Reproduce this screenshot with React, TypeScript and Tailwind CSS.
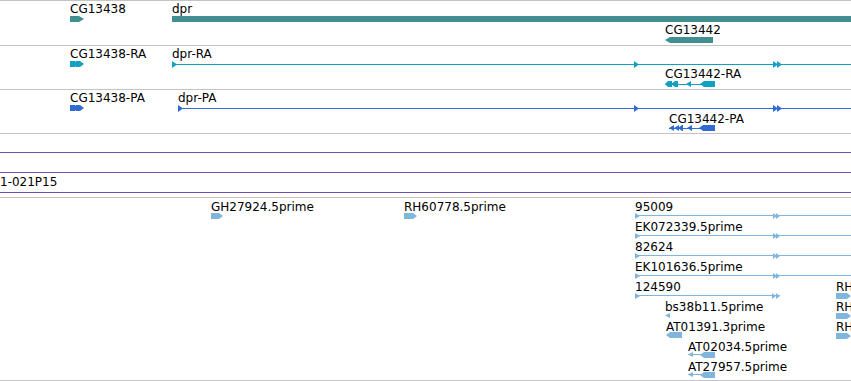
import type { ReactNode } from "react";

// colours picked off the screenshot
const TEAL = "#418f91";
const CYAN = "#12a0c3";
const BLUE = "#2f6bd0";
const EST = "#80b5dd";
const CLONE = "#7052ab";

type Label = { x: number; b: number; t: string };

// right / left pointing feature boxes
const boxR = (x1: number, x2: number, y: number, h: number, tip = 4) =>
  `${x1},${y} ${x2 - tip},${y} ${x2},${y + h / 2} ${x2 - tip},${y + h} ${x1},${y + h}`;
const boxL = (x1: number, x2: number, y: number, h: number, tip = 4) =>
  `${x1},${y + h / 2} ${x1 + tip},${y} ${x2},${y} ${x2},${y + h} ${x1 + tip},${y + h}`;
const triR = (x: number, y: number, w: number, h: number) => `${x},${y} ${x + w},${y + h / 2} ${x},${y + h}`;
const triL = (x: number, y: number, w: number, h: number) => `${x + w},${y} ${x},${y + h / 2} ${x + w},${y + h}`;

// one track: features drawn in page coordinates, shifted by the track's top
function Track({
  top,
  className,
  labels,
  children,
}: {
  top: number;
  className: string;
  labels: Label[];
  children?: ReactNode;
}) {
  return (
    <div className={`relative overflow-hidden border-b border-[#c4c4c4] ${className}`}>
      <svg className="absolute inset-0 h-full w-full">
        <g transform={`translate(0 ${-top})`}>{children}</g>
      </svg>
      {labels.map((l) => (
        <span
          key={l.t + l.x + l.b}
          className="absolute whitespace-nowrap text-[12px] leading-[14px] text-black"
          style={{ left: l.x, top: l.b - 11 - top }}
        >
          {l.t}
        </span>
      ))}
    </div>
  );
}

// transcript glyph: thin line with little strand arrows
function Transcript({ x1, x2, y, color, marks }: { x1: number; x2: number; y: number; color: string; marks: number[] }) {
  return (
    <g fill={color}>
      <rect x={x1} y={y} width={x2 - x1} height={1} />
      {marks.map((m) => (
        <polygon key={m} points={triR(m, y - 3, 5, 7)} />
      ))}
    </g>
  );
}

function MultiLeft({ x, y, color }: { x: number; y: number; color: string }) {
  // CG13442 style exon set, minus strand
  return (
    <g fill={color}>
      <rect x={x} y={y + 3} width={50} height={1} />
      <polygon points={boxL(x, x + 7, y, 6, 3)} />
      <polygon points={boxL(x + 6, x + 13, y, 6, 4)} />
      <polygon points={triL(x + 21, y, 5, 6)} />
      <polygon points={boxL(x + 35, x + 50, y, 6, 4)} />
      <polygon points={triL(x + 40, y, 5, 6)} />
    </g>
  );
}

export default function App() {
  const estRows = [211, 231, 251, 271, 291, 311, 331, 351, 371];
  return (
    <div className="h-[381px] w-[851px] overflow-hidden bg-white font-['DejaVu_Sans',sans-serif]">
      <div className="border-t border-[#c4c4c4]" />

      {/* genes */}
      <Track
        top={1}
        className="h-[45px]"
        labels={[
          { x: 70, b: 13, t: "CG13438" },
          { x: 172, b: 13, t: "dpr" },
          { x: 665, b: 34, t: "CG13442" },
        ]}
      >
        <g fill={TEAL}>
          <polygon points={boxR(70, 84, 16, 6, 5)} />
          <rect x={172} y={16} width={679} height={6} />
          <polygon points={boxL(665, 713, 37, 6, 5)} />
        </g>
      </Track>

      {/* RA transcripts */}
      <Track
        top={46}
        className="h-[44px]"
        labels={[
          { x: 70, b: 58, t: "CG13438-RA" },
          { x: 172, b: 58, t: "dpr-RA" },
          { x: 665, b: 78, t: "CG13442-RA" },
        ]}
      >
        <g fill={CYAN}>
          <polygon points={boxR(70, 78, 61, 6, 3)} />
          <polygon points={boxR(76, 84, 61, 6, 4)} />
        </g>
        <Transcript x1={172} x2={851} y={64} color={CYAN} marks={[172, 634, 773, 777]} />
        <MultiLeft x={665} y={81} color={CYAN} />
      </Track>

      {/* PA translations */}
      <Track
        top={90}
        className="h-[44px]"
        labels={[
          { x: 70, b: 102, t: "CG13438-PA" },
          { x: 178, b: 102, t: "dpr-PA" },
          { x: 669, b: 123, t: "CG13442-PA" },
        ]}
      >
        <g fill={BLUE}>
          <polygon points={boxR(70, 78, 105, 6, 3)} />
          <polygon points={boxR(76, 84, 105, 6, 4)} />
        </g>
        <Transcript x1={178} x2={851} y={108} color={BLUE} marks={[178, 634, 773, 777]} />
        <g fill={BLUE}>
          <rect x={669} y={128} width={46} height={1} />
          <polygon points={triL(669, 125, 5, 6)} />
          <polygon points={triL(674, 125, 5, 6)} />
          <polygon points={boxL(678, 683, 125, 6, 4)} />
          <polygon points={triL(687, 125, 5, 6)} />
          <polygon points={boxL(699, 715, 125, 6, 4)} />
          <polygon points={triL(704, 125, 5, 6)} />
        </g>
      </Track>

      {/* clones */}
      <Track top={134} className="h-[64px]" labels={[{ x: 0, b: 186, t: "1-021P15" }]}>
        <g fill={CLONE}>
          <rect x={0} y={152} width={851} height={1} />
          <rect x={0} y={172} width={851} height={1} />
          <rect x={0} y={192} width={851} height={1} />
        </g>
      </Track>

      {/* ESTs */}
      <Track
        top={198}
        className="h-[183px]"
        labels={[
          { x: 211, b: 211, t: "GH27924.5prime" },
          { x: 404, b: 211, t: "RH60778.5prime" },
          { x: 635, b: estRows[0], t: "95009" },
          { x: 635, b: estRows[1], t: "EK072339.5prime" },
          { x: 635, b: estRows[2], t: "82624" },
          { x: 635, b: estRows[3], t: "EK101636.5prime" },
          { x: 635, b: estRows[4], t: "124590" },
          { x: 836, b: estRows[4], t: "RH" },
          { x: 665, b: estRows[5], t: "bs38b11.5prime" },
          { x: 836, b: estRows[5], t: "RH" },
          { x: 666, b: estRows[6], t: "AT01391.3prime" },
          { x: 836, b: estRows[6], t: "RH" },
          { x: 688, b: estRows[7], t: "AT02034.5prime" },
          { x: 688, b: estRows[8], t: "AT27957.5prime" },
        ]}
      >
        <g fill={EST}>
          <polygon points={boxR(211, 223, 213, 6, 4)} />
          <polygon points={boxR(404, 417, 213, 6, 4)} />
          {[215, 235, 255, 275].map((y) => (
            <g key={y}>
              <rect x={635} y={y} width={216} height={1} />
              <polygon points={triR(635, y - 2, 5, 6)} />
              <polygon points={triR(773, y - 2, 4, 6)} />
              <polygon points={triR(776, y - 2, 4, 6)} />
            </g>
          ))}
          <rect x={635} y={295} width={145} height={1} />
          <polygon points={triR(635, 293, 5, 6)} />
          <polygon points={triR(772, 293, 4, 6)} />
          <polygon points={triR(776, 293, 4, 6)} />
          {[293, 313, 333].map((y) => (
            <polygon key={y} points={boxR(836, 851, y, 6, 4)} />
          ))}
          <polygon points={triL(665, 313, 5, 5)} />
          <polygon points={boxL(666, 682, 332, 6, 4)} />
          <polygon points={triL(672, 332, 5, 6)} />
          {[352, 372].map((y) => (
            <g key={y}>
              <rect x={688} y={y + 2} width={27} height={1} />
              <polygon points={triL(688, y, 5, 5)} />
              <polygon points={boxL(700, 715, y, 6, 4)} />
              <polygon points={triL(706, y, 5, 6)} />
            </g>
          ))}
        </g>
      </Track>
    </div>
  );
}
